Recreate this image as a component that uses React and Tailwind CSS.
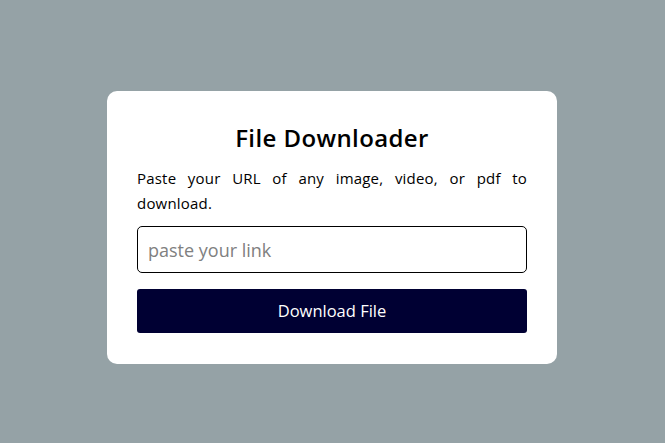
export default function App() {
  return (
    <div
      className="min-h-[443px] w-full bg-[#95a2a6] flex items-center justify-center pt-[12px] pr-[1px]"
      style={{ fontFamily: '"Open Sans", "Liberation Sans", sans-serif' }}
    >
      <div className="w-[450px] bg-white rounded-[10px] px-[30px] pt-[29px] pb-[31px]">
        <h2 className="text-center text-[24px] leading-[36px] font-semibold tracking-[0.4px] text-black">File Downloader</h2>
        <p className="mt-[10px] text-[15px] leading-[25px] text-black text-justify tracking-[0.2px]">
          Paste your URL of any image, video, or pdf to download.
        </p>
        <input
          type="text"
          placeholder="paste your link"
          className="mt-[10px] block w-full h-[47px] border border-black rounded-[5px] px-[10px] text-[18px] placeholder:text-[#808080] focus:outline-none"
        />
        <button className="mt-[16px] block w-full h-[44px] bg-[#000033] text-white text-[16.5px] rounded-[3px]">
          Download File
        </button>
      </div>
    </div>
  );
}
